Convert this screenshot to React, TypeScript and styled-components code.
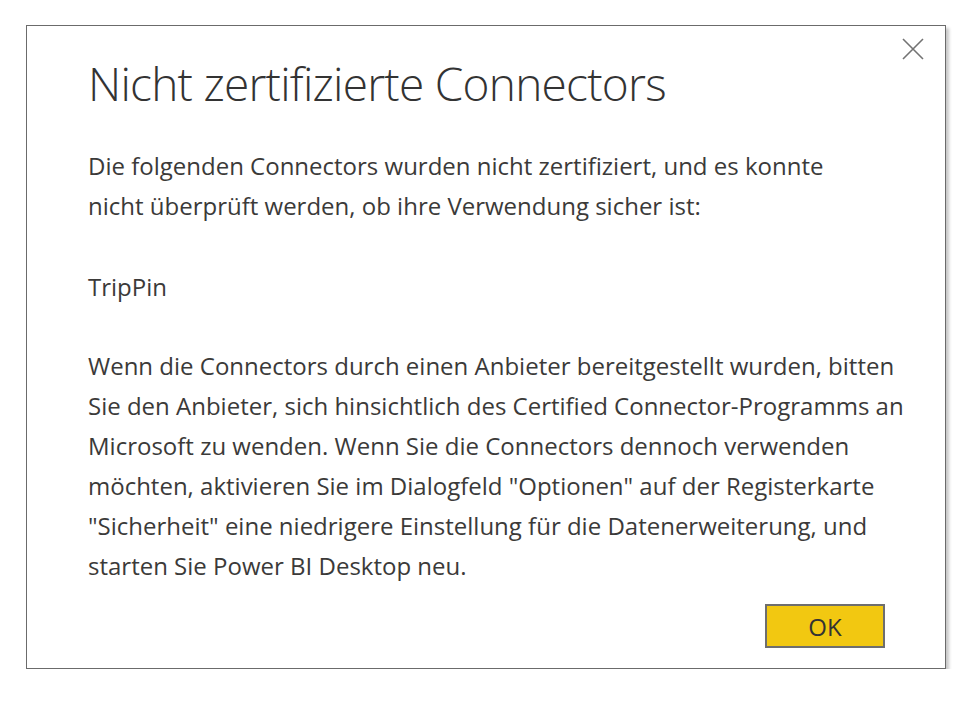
import styled, { createGlobalStyle } from "styled-components";

const GlobalStyle = createGlobalStyle`
  html, body {
    margin: 0;
    padding: 0;
    background: #ffffff;
  }
  body {
    font-family: "Open Sans", "Segoe UI", "Liberation Sans", sans-serif;
  }
`;

const Page = styled.div`
  padding: 25px 0 0 26px;
`;

const Dialog = styled.div`
  position: relative;
  width: 920px;
  height: 644px;
  border: 1px solid #6b6b6b;
  background: #ffffff;
  box-shadow: 3px 3px 3px rgba(0, 0, 0, 0.22);
  padding: 0 0 0 61px;
  box-sizing: border-box;
  display: flex;
  flex-direction: column;
`;

const CloseButton = styled.button`
  position: absolute;
  top: 12px;
  right: 21px;
  width: 22px;
  height: 22px;
  padding: 0;
  border: none;
  background: transparent;
  cursor: pointer;
  display: flex;
  align-items: center;
  justify-content: center;
`;

const Title = styled.h1`
  margin: 29px 0 0 0;
  font-weight: 300;
  font-size: 46px;
  line-height: 56px;
  color: #333333;
  letter-spacing: -0.75px;
`;

const Text = styled.p<{ gap: number }>`
  margin: ${(p) => p.gap}px 0 0 0;
  font-size: 24px;
  line-height: 40px;
  color: #3b3a39;
`;

const Footer = styled.div`
  margin-top: auto;
  display: flex;
  justify-content: flex-end;
  padding: 0 60px 20px 0;
`;

const OkButton = styled.button`
  width: 120px;
  height: 44px;
  background: #f2c811;
  border: 2px solid #6e6e6e;
  font-family: inherit;
  font-size: 24px;
  color: #333333;
  cursor: pointer;
`;

function CloseIcon() {
  return (
    <svg width="22" height="22" viewBox="0 0 22 22">
      <path d="M1 1 L21 21 M21 1 L1 21" stroke="#737373" strokeWidth="1.6" fill="none" />
    </svg>
  );
}

export default function App() {
  return (
    <>
      <GlobalStyle />
      <Page>
        <Dialog>
          <CloseButton aria-label="Schließen">
            <CloseIcon />
          </CloseButton>
          <Title>Nicht zertifizierte Connectors</Title>
          <Text gap={35}>
            Die folgenden Connectors wurden nicht zertifiziert, und es konnte
            <br />
            nicht überprüft werden, ob ihre Verwendung sicher ist:
          </Text>
          <Text gap={41}>TripPin</Text>
          <Text gap={39}>
            Wenn die Connectors durch einen Anbieter bereitgestellt wurden, bitten
            <br />
            Sie den Anbieter, sich hinsichtlich des Certified Connector-Programms an
            <br />
            Microsoft zu wenden. Wenn Sie die Connectors dennoch verwenden
            <br />
            möchten, aktivieren Sie im Dialogfeld "Optionen" auf der Registerkarte
            <br />
            "Sicherheit" eine niedrigere Einstellung für die Datenerweiterung, und
            <br />
            starten Sie Power BI Desktop neu.
          </Text>
          <Footer>
            <OkButton>OK</OkButton>
          </Footer>
        </Dialog>
      </Page>
    </>
  );
}
